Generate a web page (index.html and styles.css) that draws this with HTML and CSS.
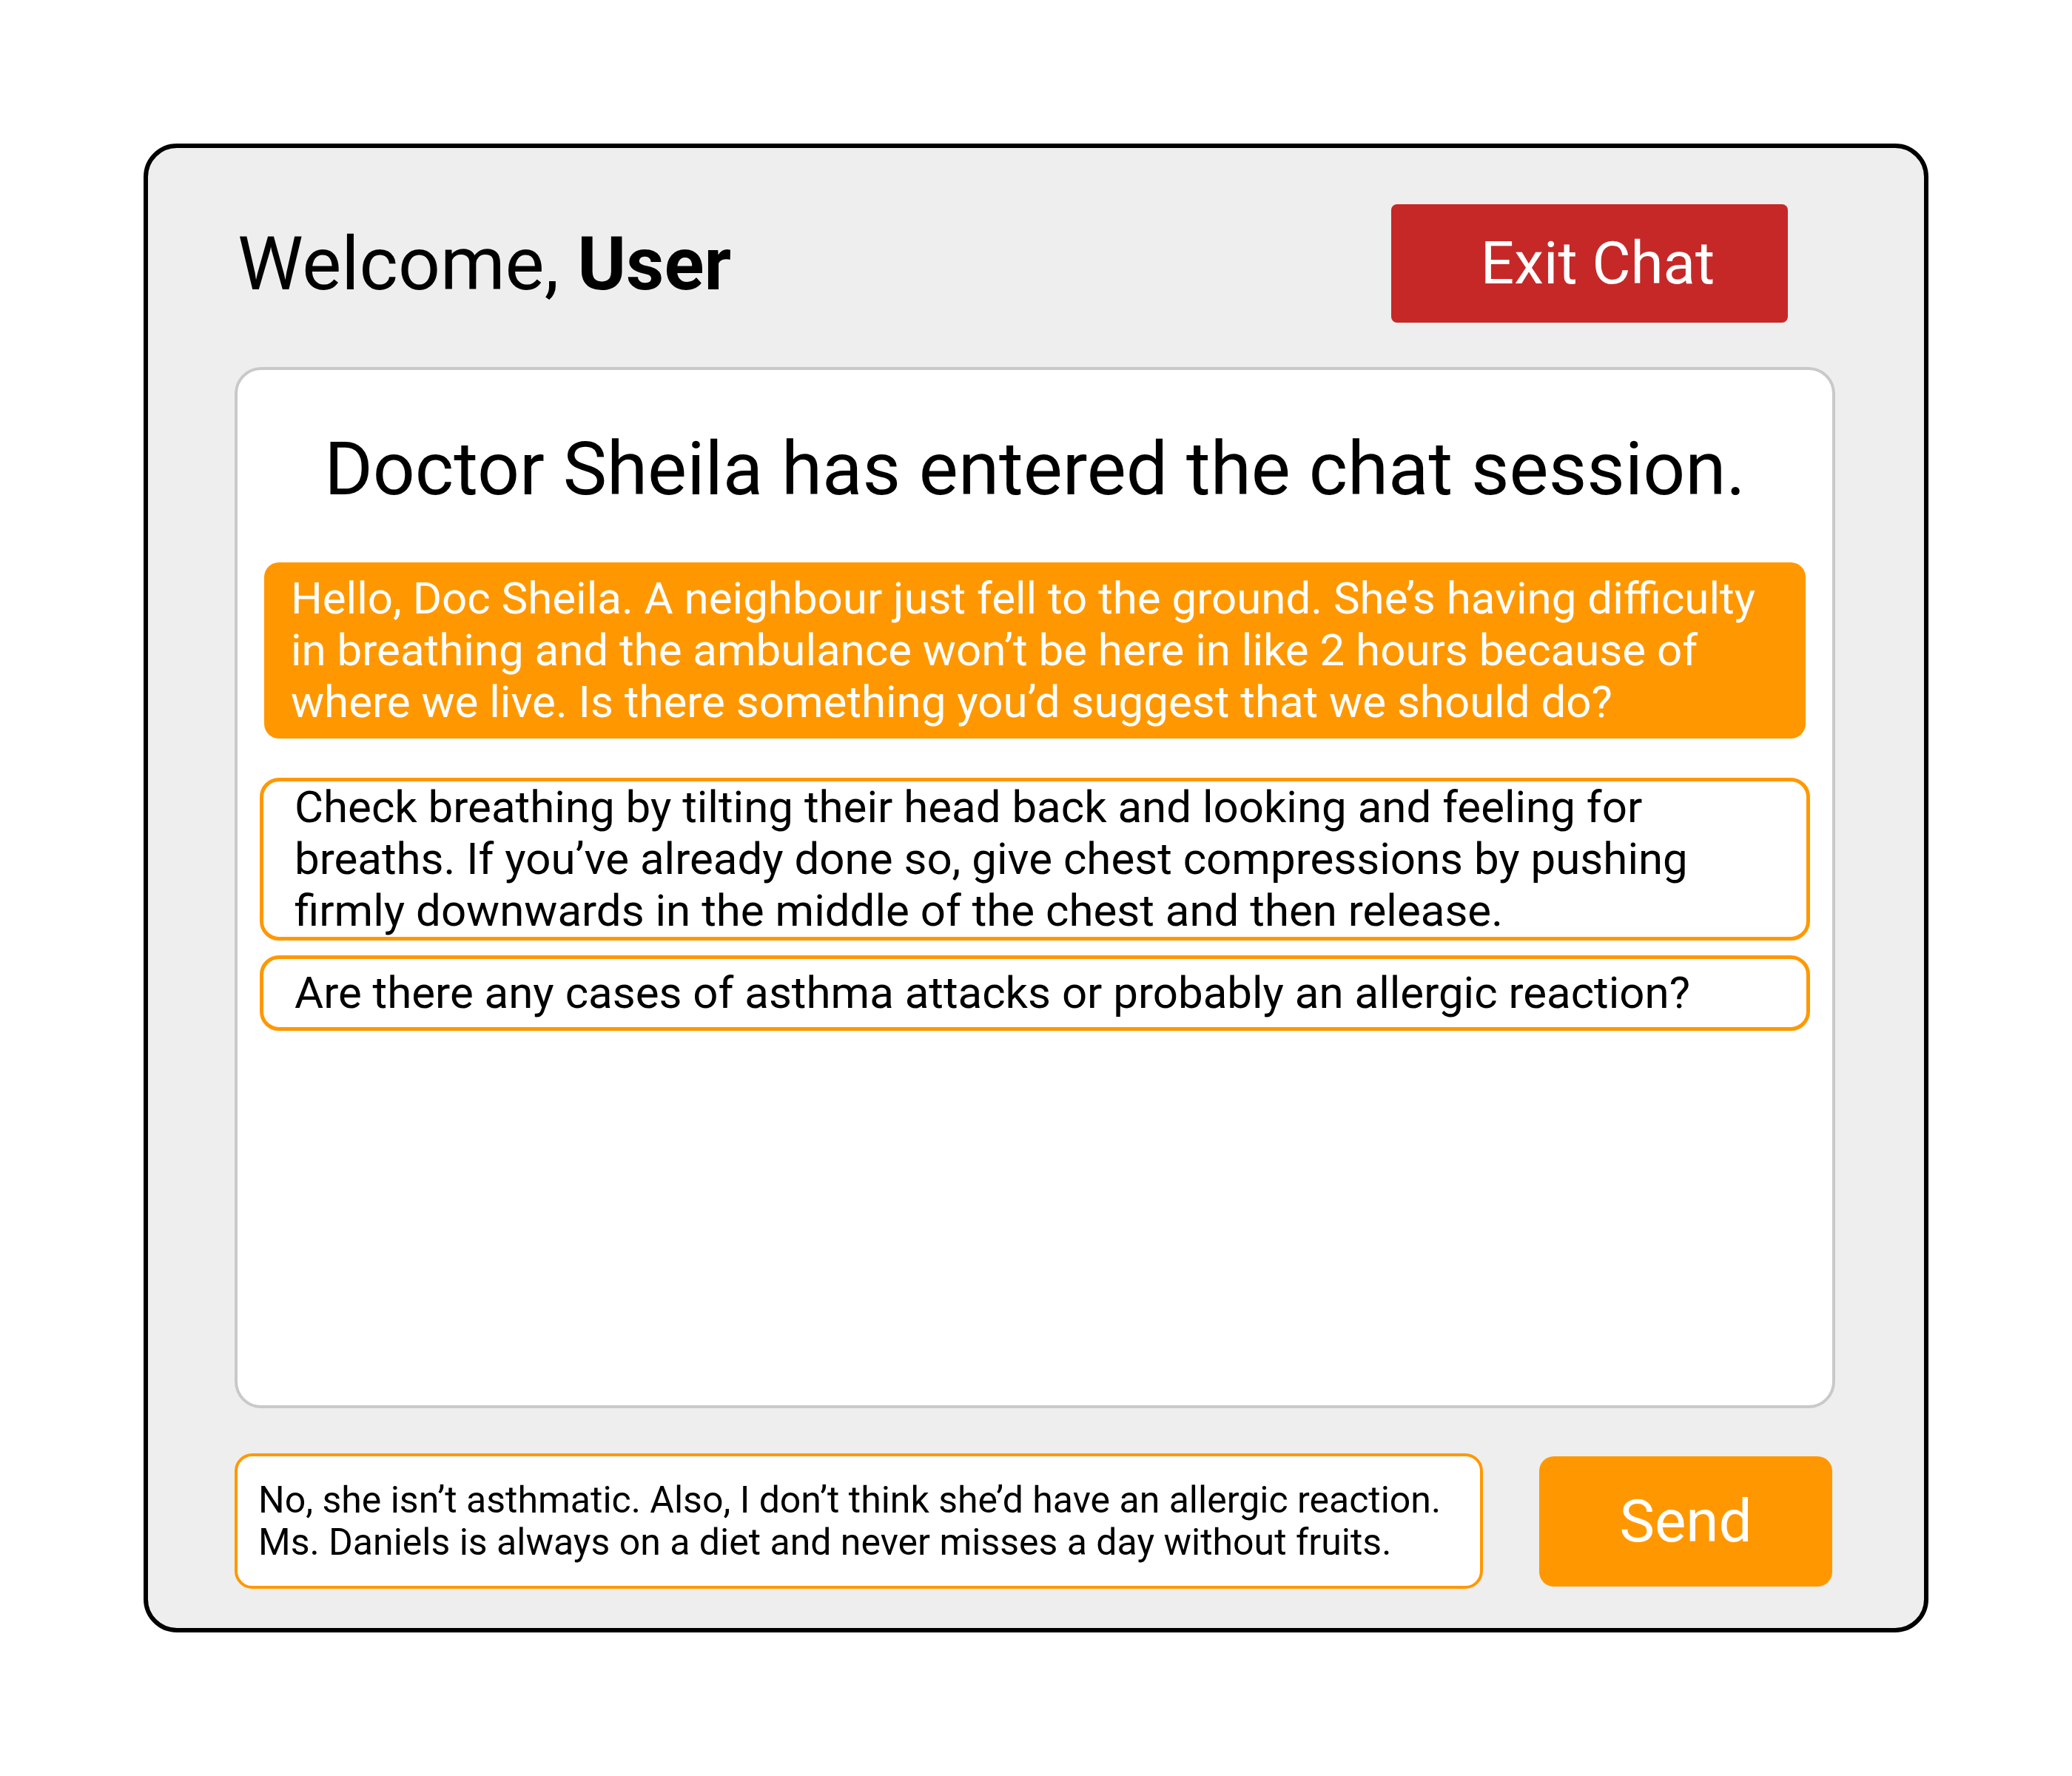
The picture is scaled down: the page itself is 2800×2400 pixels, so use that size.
FILE: index.html
```html
<!DOCTYPE html>
<html lang="en">
<head>
<meta charset="utf-8">
<title>Chat</title>
<link rel="stylesheet" href="styles.css">
</head>
<body>
<div class="frame">
  <header class="header">
    <h1 class="welcome">Welcome, <strong>User</strong></h1>
    <button class="exit" type="button">Exit Chat</button>
  </header>
  <section class="chat">
    <p class="notice">Doctor Sheila has entered the chat session.</p>
    <div class="messages">
      <div class="msg msg-user">Hello, Doc Sheila. A neighbour just fell to the ground. She’s having difficulty<br>in breathing and the ambulance won’t be here in like 2 hours because of<br>where we live. Is there something you’d suggest that we should do?</div>
      <div class="msg msg-doc msg-first">Check breathing by tilting their head back and looking and feeling for<br>breaths. If you’ve already done so, give chest compressions by pushing<br>firmly downwards in the middle of the chest and then release.</div>
      <div class="msg msg-doc msg-next">Are there any cases of asthma attacks or probably an allergic reaction?</div>
    </div>
  </section>
  <div class="composer">
    <div class="input">No, she isn’t asthmatic. Also, I don’t think she’d have an allergic reaction.<br>Ms. Daniels is always on a diet and never misses a day without fruits.</div>
    <button class="send" type="button">Send</button>
  </div>
</div>
</body>
</html>
```

FILE: styles.css
```css
body {
  margin: 0;
  background: #ffffff;
  font-family: Roboto, "Noto Sans", "Liberation Sans", sans-serif;
  color: #000;
}

.frame {
  box-sizing: border-box;
  width: 2412px;
  height: 2012px;
  margin: 194px auto 0;
  border: 6px solid #000;
  border-radius: 45px;
  background: #eeeeee;
  padding: 76px 120px 0 117px;
  display: flex;
  flex-direction: column;
}

.header {
  display: flex;
  align-items: center;
  justify-content: space-between;
  height: 160px;
  padding: 0 64px 0 4px;
}

.welcome {
  margin: 0;
  font-size: 100px;
  font-weight: 400;
  line-height: 117px;
}

.welcome strong {
  font-weight: 700;
}

.exit {
  box-sizing: border-box;
  width: 536px;
  height: 160px;
  border: none;
  border-radius: 8px;
  background: #c62828;
  color: #fff;
  font: inherit;
  font-size: 80px;
  line-height: 94px;
  padding: 0 0 0 22px;
}

.chat {
  box-sizing: border-box;
  margin-top: 60px;
  height: 1407px;
  border: 4px solid #c9c9c9;
  border-radius: 36px;
  background: #fff;
  padding: 75px 30px 0;
}

.notice {
  margin: 0 0 68px;
  text-align: center;
  font-size: 100px;
  line-height: 117px;
}

.messages {
  display: flex;
  flex-direction: column;
}

.msg {
  font-size: 60px;
  line-height: 70px;
  white-space: nowrap;
}

.msg-user {
  margin: 0 6px;
  padding: 14px 36px;
  background: #ff9800;
  color: #fff;
  border-radius: 20px;
}

.msg-doc {
  box-sizing: border-box;
  min-height: 102px;
  display: flex;
  align-items: center;
  border: 5px solid #ff9800;
  border-radius: 26px;
  padding: 0 42px;
  background: #fff;
}

.msg-first {
  margin-top: 53px;
}

.msg-next {
  margin-top: 20px;
}

.composer {
  margin-top: 61px;
  display: flex;
  align-items: center;
  justify-content: space-between;
  padding-right: 4px;
}

.input {
  box-sizing: border-box;
  width: 1687px;
  height: 183px;
  border: 4px solid #ff9800;
  border-radius: 24px;
  background: #fff;
  padding: 0 28px;
  display: flex;
  align-items: center;
  font-size: 50px;
  line-height: 57px;
  white-space: nowrap;
}

.send {
  box-sizing: border-box;
  width: 396px;
  height: 176px;
  border: none;
  border-radius: 20px;
  background: #ff9800;
  color: #fff;
  font: inherit;
  font-size: 80px;
  line-height: 94px;
}
```
